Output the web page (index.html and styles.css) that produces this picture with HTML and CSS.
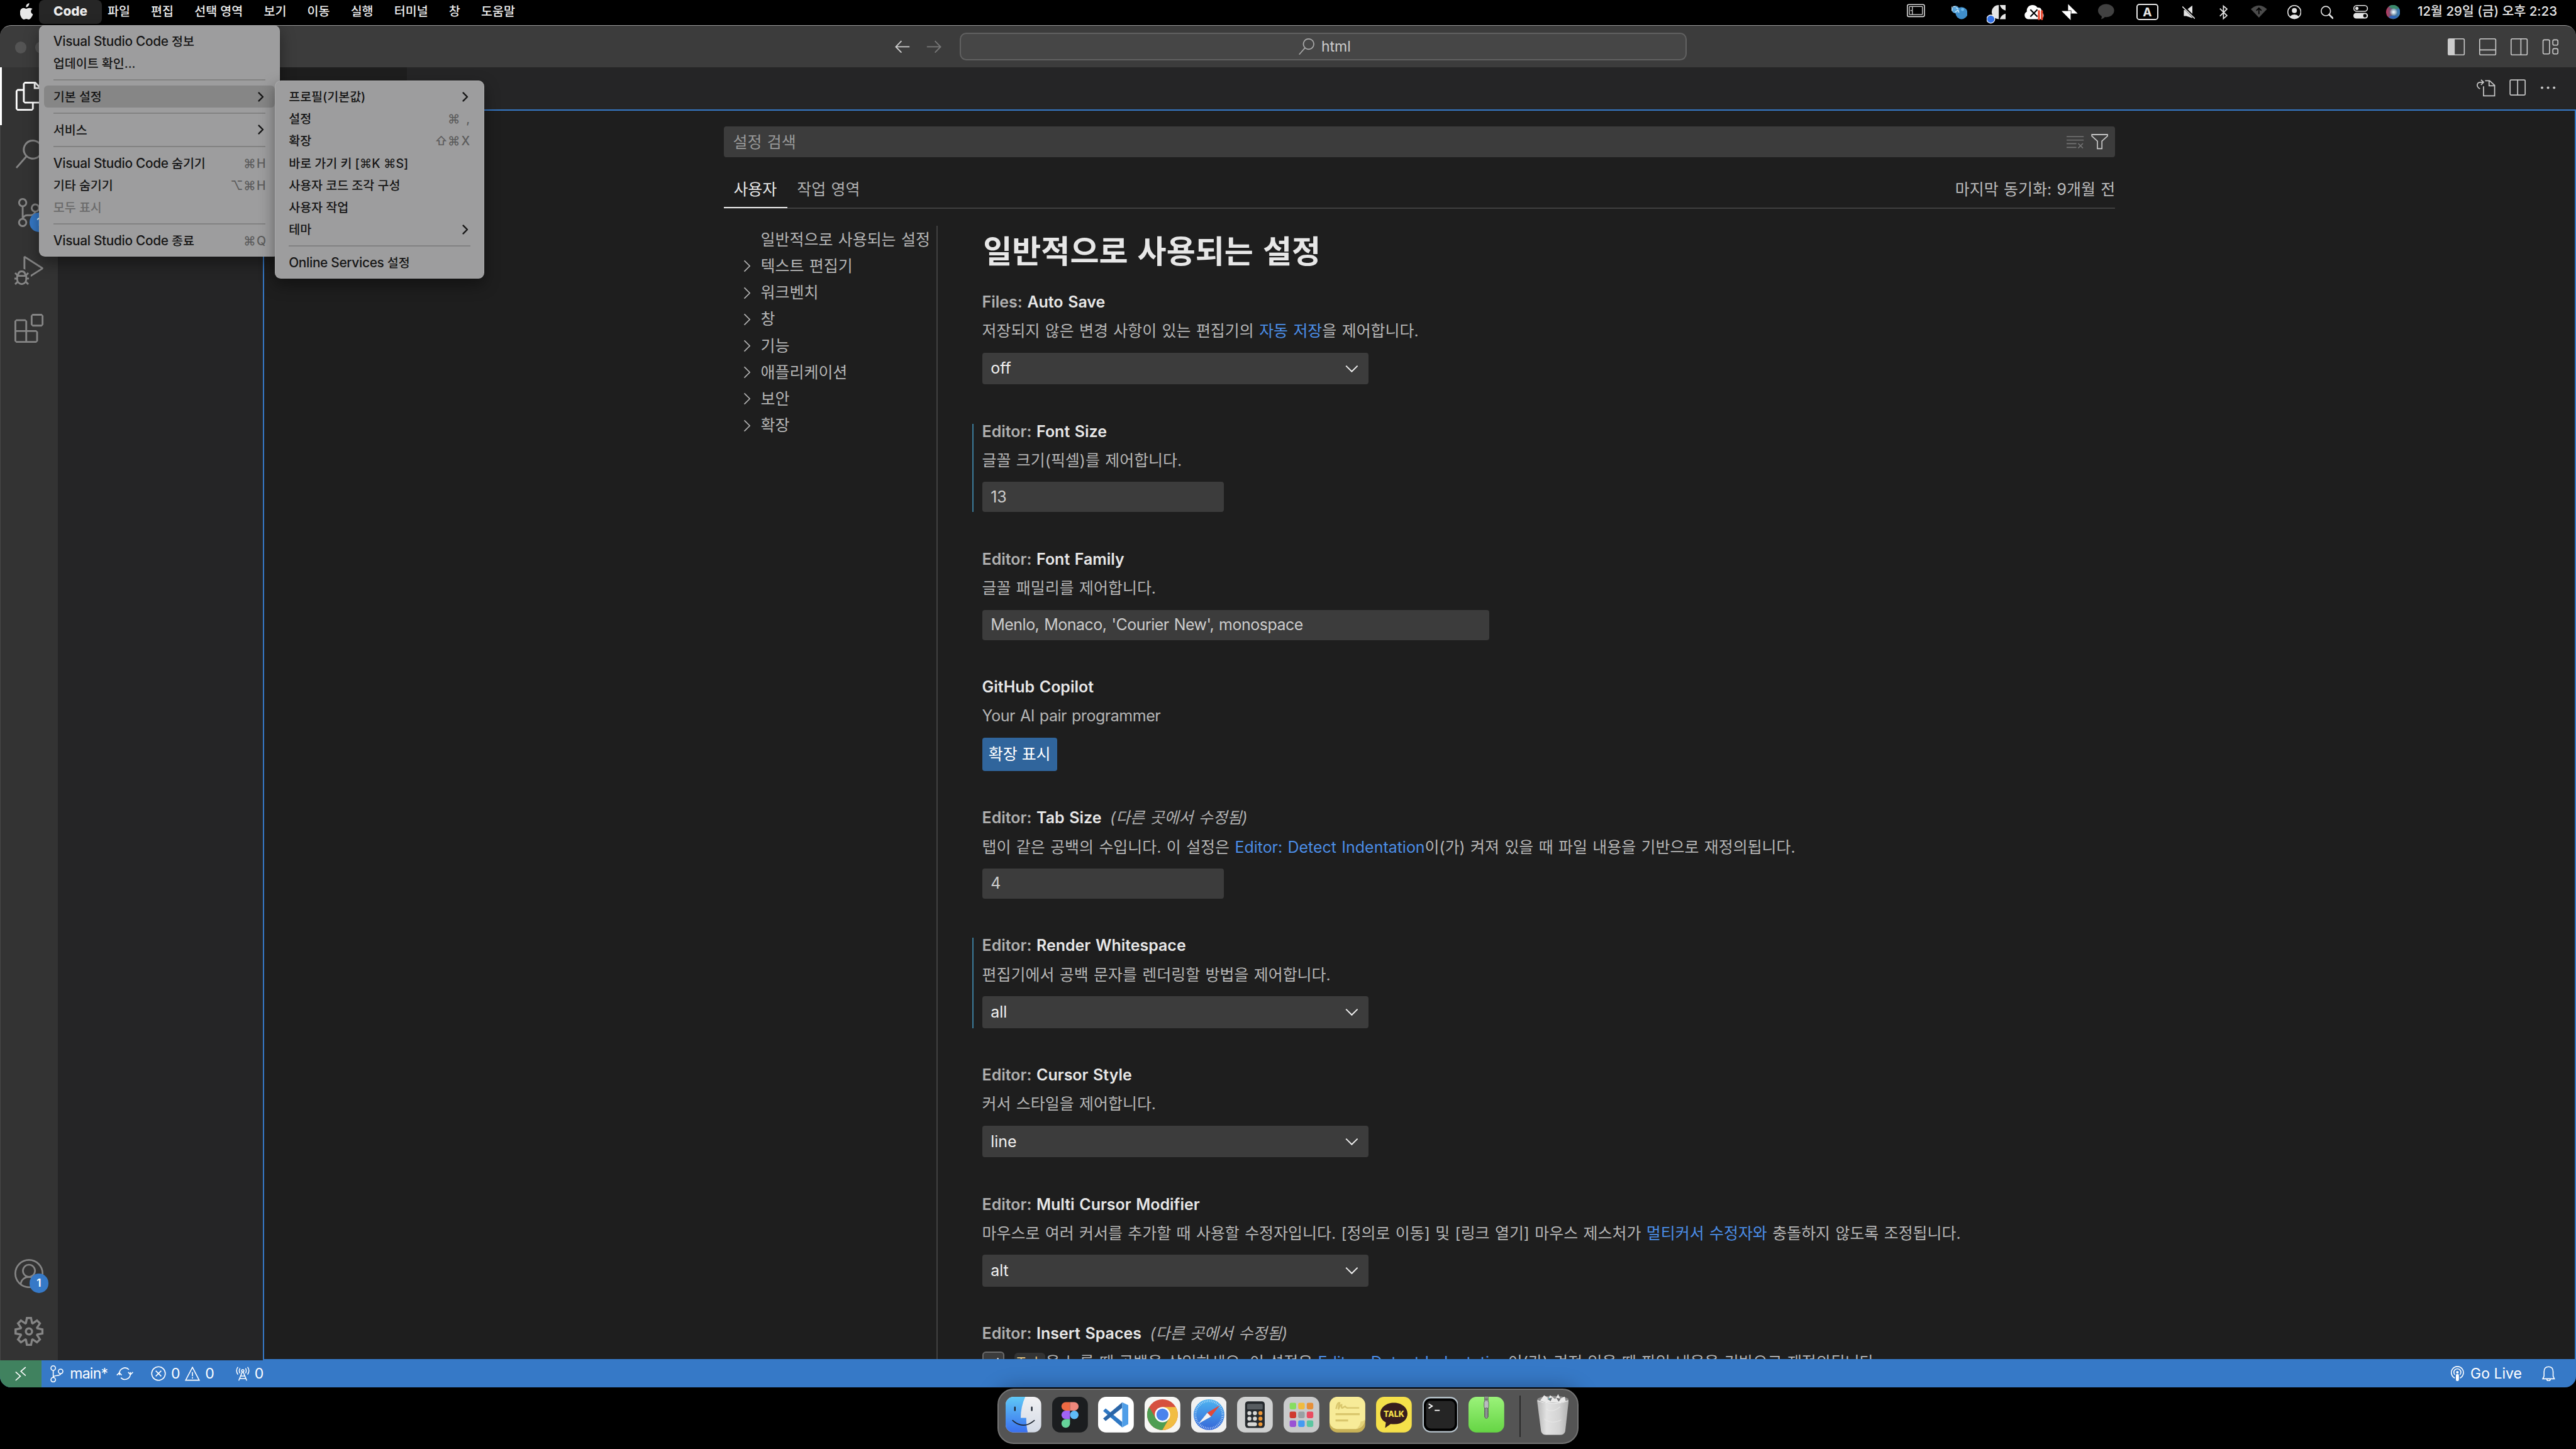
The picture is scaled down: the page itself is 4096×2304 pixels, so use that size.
FILE: index.html
```html
<!DOCTYPE html>
<html lang="ko">
<head>
<meta charset="utf-8">
<title>설정 — html</title>
<link rel="stylesheet" href="styles.css">
</head>
<body>
<svg class="defs" aria-hidden="true">
  <defs>
    <symbol id="chev-down" viewBox="0 0 26 16"><path d="M1.5 2 13 13.5 24.500 2" fill="none" stroke="currentColor" stroke-width="2.400"/></symbol>
    <symbol id="chev-right" viewBox="0 0 16 26"><path d="M2 1.500 13.500 13 2 24.500" fill="none" stroke="currentColor" stroke-width="2.200"/></symbol>
    <symbol id="menu-arrow" viewBox="0 0 12 20"><path d="M2 2 10 10 2 18" fill="none" stroke="currentColor" stroke-width="3" stroke-linecap="round" stroke-linejoin="round"/></symbol>
  </defs>
</svg>

<header class="menubar">
  <svg class="apple" viewBox="0 0 26 33"><path fill="#e8e8e8" d="M18 0c.4 2-.4 4-1.600 5.500C15.200 7 13.400 8 11.700 7.900c-.3-2 .6-4 1.700-5.300C14.600 1.200 16.500.2 18 0zM24.600 11.200c-2 1.200-3.100 2.900-3.100 5.200 0 2.700 1.500 4.700 4 5.700-.8 2.500-2 4.600-3.500 6.700-1.400 2-2.900 3.700-5 3.700-1.900 0-2.500-1.200-4.700-1.200-2.300 0-3 1.200-4.700 1.200-2 0-3.500-1.800-4.900-3.800C.6 25.600-.4 22-.4 18.700c0-5.500 3.500-8.900 7.200-8.900 2.200 0 3.900 1.400 5.300 1.400 1.300 0 3.300-1.500 5.900-1.500 2.500 0 4.900.4 6.600 1.500z"/></svg>
  <nav class="menus">
    <span class="menu-title app">Code</span><span class="menu-title">파일</span><span class="menu-title">편집</span><span class="menu-title">선택 영역</span><span class="menu-title">보기</span><span class="menu-title">이동</span><span class="menu-title">실행</span><span class="menu-title">터미널</span><span class="menu-title">창</span><span class="menu-title">도움말</span>
  </nav>
  <div class="tray">
    <svg viewBox="0 0 36 50" width="36"><g fill="none" stroke="#d9d9d9"><rect x="1" y="9" width="34" height="24" rx="3" stroke-width="2"/><rect x="5" y="13" width="26" height="16" rx="1" stroke-width="1.600"/><path d="M11 13v16" stroke-width="1.600"/></g><circle cx="8.500" cy="21" r="1.300" fill="#d9d9d9"/></svg>
    <svg viewBox="0 0 32 50" width="32"><circle cx="20" cy="26" r="12" fill="#3f8ecb"/><circle cx="8" cy="19" r="7.500" fill="#5aa5da"/><path d="M1 22V13M3 13l5 0M9 15l4 3M7 24l6-4M13 20l2 5" stroke="#d8eefb" stroke-width="1.600" fill="none"/><circle cx="22" cy="19" r="3" fill="#6db8ea"/></svg>
    <svg viewBox="0 0 38 50" width="38"><path d="M24 10v28a14 14 0 0 1 0-28z" fill="#e6e6e6"/><path d="M26 10h12v11q-9-2-12-11zM26 38h12V27q-9 2-12 11z" fill="#e6e6e6"/><circle cx="8" cy="38" r="8" fill="#3573e5" stroke="#fff" stroke-width="1.600"/></svg>
    <svg viewBox="0 0 40 50" width="40"><path d="M8 38a8 8 0 0 1-2-15C5 15 11 10 17 10q7 0 10 5c6-1 9 3 8 8 4 3 5 7 4 10q-2 5-7 5z" fill="#fff"/><path d="m13 19 14 14M27 19 13 33" stroke="#000" stroke-width="2.600"/><path d="M30 22v16M36 22v16" stroke="#e8452c" stroke-width="4" stroke-linecap="round"/></svg>
    <svg viewBox="0 0 32 50" width="32"><path d="M13 8 32 27H13zM0 22h18v18z" fill="#fff"/><path d="M13 21h6v6" fill="none" stroke="#000" stroke-width="1"/></svg>
    <svg viewBox="0 0 32 50" width="32"><ellipse cx="16" cy="21" rx="16" ry="13" fill="#414141"/><path d="M7 30q1 5-1 8 6-1 9-6z" fill="#414141"/></svg>
    <span class="ime">A</span>
    <svg viewBox="0 0 26 50" width="26"><path d="M3 20h5l12-9v25L8 32H3z" fill="#e3e3e3"/><path d="m0 11 27 27" stroke="#000" stroke-width="5"/><path d="m0 13 25 24" stroke="#e3e3e3" stroke-width="2"/></svg>
    <svg viewBox="0 0 17 50" width="17"><path d="m1 17 14 14-7 6V12l7 6L1 32" fill="none" stroke="#e3e3e3" stroke-width="2.200"/></svg>
    <svg viewBox="0 0 32 50" width="32"><path d="M0 18q16-14 32 0L16 35z" fill="#4b4b4b"/><path d="M16 28V16m-5 5 5-5 5 5" stroke="#000" stroke-width="2.200" fill="none"/></svg>
    <svg viewBox="0 0 28 50" width="28"><circle cx="14" cy="24" r="13" fill="none" stroke="#e3e3e3" stroke-width="2"/><circle cx="14" cy="21" r="5" fill="#e3e3e3"/><path d="M4.500 33q9.500-8.500 19 0-9.500 8-19 0z" fill="#e3e3e3"/></svg>
    <svg viewBox="0 0 25 50" width="25"><circle cx="10.300" cy="22" r="9.300" fill="none" stroke="#e3e3e3" stroke-width="2"/><path d="m17 29 7 7" stroke="#e3e3e3" stroke-width="3.400" stroke-linecap="round"/></svg>
    <svg viewBox="0 0 29 50" width="29"><rect x="1" y="11" width="27" height="11.500" rx="5.700" fill="none" stroke="#e3e3e3" stroke-width="2"/><circle cx="7" cy="16.700" r="3.200" fill="#e3e3e3"/><rect x="0" y="25.500" width="29" height="11.500" rx="5.700" fill="#e3e3e3"/><circle cx="23" cy="31.200" r="3.400" fill="#000"/></svg>
    <svg viewBox="0 0 28 50" width="28"><defs><radialGradient id="siri"><stop offset="0" stop-color="#fff"/><stop offset=".3" stop-color="#d9e9f5" stop-opacity=".9"/><stop offset="1" stop-color="#fff" stop-opacity="0"/></radialGradient><linearGradient id="siri2" x1="0" x2="1"><stop offset="0" stop-color="#c2355f"/><stop offset=".5" stop-color="#456a80"/><stop offset="1" stop-color="#3a7fc0"/></linearGradient></defs><circle cx="14" cy="24" r="14" fill="url(#siri2)"/><path d="M5 13a14 14 0 0 1 21 4q-9 3-21-4z" fill="#3a8a6c"/><path d="M5 34a14 14 0 0 0 18 0q-9-6-18 0z" fill="#2f66b8"/><circle cx="15" cy="24" r="8" fill="url(#siri)"/></svg>
    <span class="clock">12월 29일 (금) 오후 2:23</span>
  </div>
</header>

<main class="window">
  <div class="titlebar">
    <div class="lights"><i></i><i></i><i></i></div>
    <div class="history">
      <svg viewBox="0 0 30 26"><path d="M29 13H2M13 1.500 1.800 13 13 24.500" fill="none" stroke="#ccc" stroke-width="2.400"/></svg>
      <svg viewBox="0 0 30 26"><path d="M1 13h27M17 1.500 28.200 13 17 24.500" fill="none" stroke="#777" stroke-width="2.400"/></svg>
    </div>
    <div class="command">
      <svg viewBox="0 0 24 24"><path fill="#a8a8a8" d="M15.250 0a8.250 8.250 0 0 0-6.180 13.720L1 22.880l1.120 1 8.050-9.120A8.251 8.251 0 1 0 15.250.01V0zm0 15a6.750 6.750 0 1 1 0-13.500 6.750 6.750 0 0 1 0 13.500z"/></svg>
      <span>html</span>
    </div>
    <div class="layout-icons">
      <svg viewBox="0 0 34 34"><rect x="1" y="1" width="32" height="32" rx="2.500" fill="none" stroke="#ccc" stroke-width="2"/><path d="M1 1h13v32H1z" fill="#ccc"/></svg>
      <svg viewBox="0 0 34 34"><rect x="1" y="1" width="32" height="32" rx="2.500" fill="none" stroke="#ccc" stroke-width="2"/><path d="M1 23h32" stroke="#ccc" stroke-width="2"/></svg>
      <svg viewBox="0 0 34 34"><rect x="1" y="1" width="32" height="32" rx="2.500" fill="none" stroke="#ccc" stroke-width="2"/><path d="M20.500 1v32" stroke="#ccc" stroke-width="2"/></svg>
      <svg viewBox="0 0 34 34"><g fill="none" stroke="#ccc" stroke-width="2"><rect x="2" y="3" width="13" height="28" rx="2.500"/><rect x="21.500" y="3" width="10" height="10.500" rx="2.500"/><rect x="21.500" y="20.500" width="10" height="10.500" rx="2.500"/></g></svg>
    </div>
  </div>

  <div class="body">
    <aside class="activity">
      <div class="act active"><svg viewBox="0 0 24 24"><path d="M17.500 0h-9L7 1.500V6H2.500L1 7.500v15.070L2.500 24h12.070L16 22.570V18h4.700l1.300-1.430V4.500L17.500 0zm0 2.120l2.380 2.380H17.500V2.120zm-3 20.380h-12v-15H7v9.070L8.500 18h6v4.500zm6-6h-12v-15H16V6h4.500v10.500z"/></svg></div>
      <div class="act"><svg viewBox="0 0 24 24"><path d="M15.250 0a8.250 8.250 0 0 0-6.180 13.720L1 22.880l1.120 1 8.050-9.120A8.251 8.251 0 1 0 15.250.01V0zm0 15a6.750 6.750 0 1 1 0-13.500 6.750 6.750 0 0 1 0 13.500z"/></svg></div>
      <div class="act"><svg viewBox="0 0 24 24"><path d="M21.007 8.222A3.738 3.738 0 0 0 15.045 5.200a3.737 3.737 0 0 0 1.156 6.583 2.988 2.988 0 0 1-2.668 1.670h-2.990a4.456 4.456 0 0 0-2.989 1.165V7.400a3.737 3.737 0 1 0-1.494 0v9.117a3.776 3.776 0 1 0 1.816.099 2.990 2.990 0 0 1 2.668-1.667h2.990a4.484 4.484 0 0 0 4.223-3.039 3.736 3.736 0 0 0 3.250-3.687zM4.565 3.738a2.242 2.242 0 1 1 4.484 0 2.242 2.242 0 0 1-4.484 0zm4.484 16.441a2.242 2.242 0 1 1-4.484 0 2.242 2.242 0 0 1 4.484 0zm8.221-9.715a2.242 2.242 0 1 1 0-4.485 2.242 2.242 0 0 1 0 4.485z"/></svg><b class="badge">1</b></div>
      <div class="act"><svg viewBox="0 0 24 24"><path d="M10.940 13.500l-1.320 1.320a3.730 3.730 0 0 0-7.240 0L1.060 13.500 0 14.560l1.720 1.720-.22.22V18H0v1.500h1.500v.08c.077.489.214.966.41 1.420L0 22.940 1.060 24l1.650-1.650A4.308 4.308 0 0 0 6 24a4.310 4.310 0 0 0 3.290-1.650L10.940 24 12 22.940 10.090 21c.198-.464.336-.951.41-1.450v-.1H12V18h-1.500v-1.500l-.22-.22L12 14.560l-1.060-1.060zM6 13.500a2.250 2.250 0 0 1 2.250 2.250h-4.500A2.250 2.250 0 0 1 6 13.500zm3 6a3.330 3.330 0 0 1-3 3 3.330 3.330 0 0 1-3-3v-2.250h6v2.250zm14.760-9.900v1.260L13.500 17.370V15.600l8.500-5.370L9 2v9.460a5.070 5.070 0 0 0-1.500-.72V.63L8.640 0l15.120 9.600z"/></svg></div>
      <div class="act"><svg viewBox="0 0 24 24"><path d="M13.500 1.500L15 0h7.500L24 1.500V9l-1.500 1.500H15L13.500 9V1.500zm1.500 0V9h7.500V1.500H15zM0 15V6l1.500-1.500H9L10.500 6v7.500H18l1.500 1.500v7.500L18 24H1.500L0 22.500V15zm9-1.500V6H1.500v7.500H9zM9 15H1.500v7.500H9V15zm1.500 7.500H18V15h-7.500v7.500z"/></svg></div>
      <div class="act account"><svg viewBox="0 0 24 24"><g fill="none" stroke="#858585" stroke-width="1.400"><circle cx="12" cy="12" r="11.300"/><circle cx="12" cy="9.700" r="5"/><path d="M5.200 20.900C5.500 17 8.500 14.800 12 14.800s6.500 2.200 6.800 6.100"/></g></svg><b class="badge">1</b></div>
      <div class="act"><svg viewBox="0 0 24 24"><path d="M19.850 8.750l4.150.83v4.840l-4.150.83 2.350 3.520-3.430 3.430-3.520-2.350-.83 4.150H9.580l-.83-4.150-3.520 2.350-3.430-3.430 2.350-3.520L0 14.420V9.580l4.150-.83L1.800 5.230 5.230 1.800l3.520 2.350L9.580 0h4.840l.83 4.150 3.520-2.350 3.430 3.430-2.350 3.520zm-1.570 5.070l4-.81v-2l-4-.81-.54-1.300 2.290-3.430-1.430-1.430-3.430 2.290-1.300-.54-.81-4h-2l-.81 4-1.300.54-3.430-2.290-1.430 1.430L6.380 8.900l-.54 1.300-4 .81v2l4 .81.54 1.300-2.290 3.430 1.430 1.430 3.430-2.290 1.300.54.81 4h2l.81-4 1.300-.54 3.430 2.290 1.430-1.430-2.290-3.430.54-1.300zm-8.186-4.672A3.430 3.430 0 0 1 12 8.570 3.440 3.440 0 0 1 15.430 12a3.430 3.430 0 1 1-5.336-2.852zm.956 4.274c.281.188.612.288.95.288A1.700 1.700 0 0 0 13.710 12a1.710 1.710 0 1 0-2.660 1.422z"/></svg></div>
    </aside>
    <aside class="sidebar"></aside>
    <section class="group">
      <div class="tabs">
        <div class="tab"></div>
        <div class="tab-actions">
          <svg viewBox="0 0 40 36"><g fill="none" stroke="#c5c5c5" stroke-width="2.200"><path d="M15 14v19h22V12L27 3h-9M26 3v10h11"/><path d="M8 19C0 15 1 6 9 6h5M10 1l5 5-5 5"/></g></svg>
          <svg viewBox="0 0 34 34"><rect x="1.500" y="1.500" width="30" height="30" rx="2" fill="none" stroke="#c5c5c5" stroke-width="2.200"/><path d="M16.500 1v31" stroke="#c5c5c5" stroke-width="2.200"/></svg>
          <svg viewBox="0 0 34 34"><g fill="#c5c5c5"><circle cx="5" cy="17" r="2.500"/><circle cx="17" cy="17" r="2.500"/><circle cx="29" cy="17" r="2.500"/></g></svg>
        </div>
      </div>
      <div class="editor">
        <div class="settings">
          <div class="search"><span>설정 검색</span>
            <svg class="clear" viewBox="0 0 34 34"><path d="M0 6.500h34M0 13.500h34M0 20.500h19.500M0 28h19.500M23 20l9.500 9.500M32.500 20 23 29.500" fill="none" stroke="#737373" stroke-width="2"/></svg>
            <svg class="filter" viewBox="0 0 34 34"><path d="M1.500 2.500h31v3L21.500 15.500v15h-9v-15L1.500 5.500z" fill="none" stroke="#c5c5c5" stroke-width="2.200"/></svg>
          </div>
          <div class="scopes"><span class="scope on">사용자</span><span class="scope">작업 영역</span><span class="sync">마지막 동기화: 9개월 전</span></div>
          <div class="split">
            <ul class="toc">
              <li><i></i>일반적으로 사용되는 설정</li>
              <li><svg><use href="#chev-right"/></svg>텍스트 편집기</li>
              <li><svg><use href="#chev-right"/></svg>워크벤치</li>
              <li><svg><use href="#chev-right"/></svg>창</li>
              <li><svg><use href="#chev-right"/></svg>기능</li>
              <li><svg><use href="#chev-right"/></svg>애플리케이션</li>
              <li><svg><use href="#chev-right"/></svg>보안</li>
              <li><svg><use href="#chev-right"/></svg>확장</li>
            </ul>
            <div class="list">
              <h1>일반적으로 사용되는 설정</h1>
              <article class="item"><h2>Files: <b>Auto Save</b></h2><p>저장되지 않은 변경 사항이 있는 편집기의 <a>자동 저장</a>을 제어합니다.</p><div class="select">off<svg><use href="#chev-down"/></svg></div></article>
              <article class="item modified"><h2>Editor: <b>Font Size</b></h2><p>글꼴 크기(픽셀)를 제어합니다.</p><div class="input">13</div></article>
              <article class="item"><h2>Editor: <b>Font Family</b></h2><p>글꼴 패밀리를 제어합니다.</p><div class="input wide">Menlo, Monaco, 'Courier New', monospace</div></article>
              <article class="item"><h2><b>GitHub Copilot</b></h2><p class="latin">Your AI pair programmer</p><div class="button">확장 표시</div></article>
              <article class="item"><h2>Editor: <b>Tab Size</b><em>(다른 곳에서 수정됨)</em></h2><p>탭이 같은 공백의 수입니다. 이 설정은 <a>Editor: Detect Indentation</a>이(가) 켜져 있을 때 파일 내용을 기반으로 재정의됩니다.</p><div class="input">4</div></article>
              <article class="item modified"><h2>Editor: <b>Render Whitespace</b></h2><p>편집기에서 공백 문자를 렌더링할 방법을 제어합니다.</p><div class="select">all<svg><use href="#chev-down"/></svg></div></article>
              <article class="item"><h2>Editor: <b>Cursor Style</b></h2><p>커서 스타일을 제어합니다.</p><div class="select">line<svg><use href="#chev-down"/></svg></div></article>
              <article class="item"><h2>Editor: <b>Multi Cursor Modifier</b></h2><p>마우스로 여러 커서를 추가할 때 사용할 수정자입니다. [정의로 이동] 및 [링크 열기] 마우스 제스처가 <a>멀티커서 수정자와</a> 충돌하지 않도록 조정됩니다.</p><div class="select">alt<svg><use href="#chev-down"/></svg></div></article>
              <article class="item"><h2>Editor: <b>Insert Spaces</b><em>(다른 곳에서 수정됨)</em></h2><div class="check-row"><span class="check"><svg viewBox="0 0 44 44"><path d="M11 24l7 8L33 12" fill="none" stroke="#e0e0e0" stroke-width="3"/></svg></span><p><code>Tab</code>을 누를 때 공백을 삽입하세요. 이 설정은 <a>Editor: Detect Indentation</a>이(가) 켜져 있을 때 파일 내용을 기반으로 재정의됩니다.</p></div></article>
            </div>
          </div>
        </div>
      </div>
    </section>
  </div>

  <footer class="status">
    <div class="remote"><svg viewBox="0 0 22 28"><path d="M1 10.500 10.500 19 1 27.500M21 1 11.500 9.500 21 18" fill="none" stroke="#fff" stroke-width="2"/></svg></div>
    <svg class="branch" viewBox="0 0 26 34"><g fill="none" stroke="#fff" stroke-width="2"><circle cx="5.800" cy="5.500" r="4.500"/><circle cx="5.800" cy="28.500" r="4.500"/><circle cx="20.500" cy="12" r="4.500"/><path d="M5.800 10v14M20.500 16.500c0 6-14.700 1.500-14.700 7.500"/></g></svg>
    <span class="main">main*</span>
    <svg class="syncing" viewBox="0 0 34 28"><g fill="none" stroke="#fff" stroke-width="2"><path d="M6 17V13.500A11 11 0 0 1 25 6M28 11v3.500A11 11 0 0 1 9 22M1 17l5-5 4.500 5M33 11l-5 5-4.500-5"/></g></svg>
    <svg class="err" viewBox="0 0 30 30"><g fill="none" stroke="#fff" stroke-width="2"><circle cx="15" cy="15" r="13.500"/><path d="m9.500 9.500 11 11M20.500 9.500l-11 11"/></g></svg>
    <span class="n1">0</span>
    <svg class="warn" viewBox="0 0 30 28"><path d="M15 1.500 28.500 27h-27zM15 11v8M15 21v2.800" fill="none" stroke="#fff" stroke-width="2"/></svg>
    <span class="n2">0</span>
    <svg class="ports" viewBox="0 0 30 30"><g fill="none" stroke="#fff" stroke-width="1.900"><circle cx="15" cy="9.500" r="2.300"/><path d="M14 12 7 29M16 12l7 17M11 20h8M9 25h12M9.500 4.500q-3 5 0 10M20.500 4.500q3 5 0 10M5.500 2q-5.500 7 0 15M24.500 2q5.500 7 0 15"/></g></svg>
    <span class="n3">0</span>
    <span class="spacer"></span>
    <svg class="cast" viewBox="0 0 26 30"><g fill="none" stroke="#fff" stroke-width="2"><path d="M8 24A12 12 0 1 1 18 24"/><path d="M8 17.500a7 7 0 1 1 10 0"/></g><circle cx="13" cy="12.500" r="2.600" fill="#fff"/><rect x="10" y="16" width="6" height="14" rx="2.600" fill="#fff"/></svg>
    <span class="live">Go Live</span>
    <svg class="bell" viewBox="0 0 26 30"><path d="M1.500 25.500h23L22 20v-8.500C22 5 18.500 1.500 13 1.500S4 5 4 11.500V20zM9.500 26a3.500 3.500 0 0 0 7 0" fill="none" stroke="#fff" stroke-width="2"/></svg>
  </footer>
</main>

<div class="dropdown main-menu">
  <div class="row"><span><span class="lat">Visual Studio Code</span> 정보</span></div>
  <div class="row"><span>업데이트 확인...</span></div>
  <hr>
  <div class="row hot"><span>기본 설정</span><svg class="arr"><use href="#menu-arrow"/></svg></div>
  <hr>
  <div class="row"><span>서비스</span><svg class="arr"><use href="#menu-arrow"/></svg></div>
  <hr>
  <div class="row"><span><span class="lat">Visual Studio Code</span> 숨기기</span><kbd><i>⌘</i><i>H</i></kbd></div>
  <div class="row"><span>기타 숨기기</span><kbd><i>⌥</i><i>⌘</i><i>H</i></kbd></div>
  <div class="row off"><span>모두 표시</span></div>
  <hr>
  <div class="row"><span><span class="lat">Visual Studio Code</span> 종료</span><kbd><i>⌘</i><i>Q</i></kbd></div>
</div>
<div class="dropdown sub-menu">
  <div class="row"><span>프로필(기본값)</span><svg class="arr"><use href="#menu-arrow"/></svg></div>
  <div class="row"><span>설정</span><kbd><i>⌘</i><i>,</i></kbd></div>
  <div class="row"><span>확장</span><kbd><i>⇧</i><i>⌘</i><i>X</i></kbd></div>
  <div class="row"><span>바로 가기 키 [<i class="sym">⌘</i>K <i class="sym">⌘</i>S]</span></div>
  <div class="row"><span>사용자 코드 조각 구성</span></div>
  <div class="row"><span>사용자 작업</span></div>
  <div class="row"><span>테마</span><svg class="arr"><use href="#menu-arrow"/></svg></div>
  <hr>
  <div class="row"><span><span class="lat">Online Services</span> 설정</span></div>
</div>

<div class="dock">
  <svg class="app" viewBox="0 0 71 71"><defs><linearGradient id="fi" x2="0" y2="1"><stop stop-color="#5fc8f6"/><stop offset="1" stop-color="#3a6fee"/></linearGradient><linearGradient id="fr" x2="0" y2="1"><stop stop-color="#f1f1f3"/><stop offset="1" stop-color="#d3dae6"/></linearGradient><clipPath id="rr"><rect width="71" height="71" rx="16"/></clipPath></defs><g clip-path="url(#rr)"><path d="M0 0h71v71H0z" fill="url(#fr)"/><path d="M0 0h39q-9 20-9 42h11q0 17 3 29H0z" fill="url(#fi)"/></g><path d="M18.500 21v6M52 21v6" stroke="#1d2530" stroke-width="3" stroke-linecap="round"/><path d="M14 47q21 19 43 0" fill="none" stroke="#1d2530" stroke-width="2.200" stroke-linecap="round"/></svg>
  <svg class="app" viewBox="0 0 71 71"><rect width="71" height="71" rx="16" fill="#1b1d1f"/><path d="M27 10.500h8.500v17H27a8.500 8.500 0 0 1 0-17z" fill="#ee6a43"/><path d="M35.500 10.500H44a8.500 8.500 0 0 1 0 17h-8.500z" fill="#f0887c"/><path d="M27 27.500h8.500v17H27a8.500 8.500 0 0 1 0-17z" fill="#a063f5"/><circle cx="44" cy="36" r="8.500" fill="#5fbcf7"/><path d="M27 44.500h8.500V53A8.500 8.500 0 1 1 27 44.500z" fill="#66d39a"/></svg>
  <svg class="app" viewBox="0 0 71 71"><rect width="71" height="71" rx="16" fill="#fff"/><path d="M10 28l5-5 33 27v11z" fill="#2f78c4"/><path d="M10 43l5 5 33-26V11z" fill="#2b66a8"/><path d="M48 11l12 5.500v38L48 61z" fill="#4f9ee8"/></svg>
  <svg class="app" viewBox="0 0 71 71"><rect width="71" height="71" rx="16" fill="#f6f6f4"/><circle cx="35.500" cy="35.500" r="30.500" fill="#d6503f"/><path d="M9.100 20.250A30.500 30.500 0 0 0 35.500 66L48.700 43 35.500 35.500 22.300 43z" fill="#4f9e52"/><path d="M61.900 20.250A30.500 30.500 0 0 1 35.500 66L48.700 43 35.500 20.250z" fill="#f1bd42"/><circle cx="35.500" cy="35.500" r="15.200" fill="#fff"/><circle cx="35.500" cy="35.500" r="12" fill="#4a83ec"/></svg>
  <svg class="app" viewBox="0 0 71 71"><defs><linearGradient id="sf" x2="0" y2="1"><stop stop-color="#4db3f0"/><stop offset="1" stop-color="#3667d8"/></linearGradient></defs><rect width="71" height="71" rx="16" fill="#f1f1f1"/><circle cx="35.500" cy="35.500" r="30.500" fill="url(#sf)"/><circle cx="35.500" cy="35.500" r="27" fill="none" stroke="#cfe4fa" stroke-width="4" stroke-dasharray="1 2.530"/><path d="M57 17 39.500 39.500l-7.500-7.500z" fill="#e2493b"/><path d="M15 53 32 32l7.500 7.500z" fill="#f3f3f3"/></svg>
  <svg class="app" viewBox="0 0 71 71"><rect width="71" height="71" rx="16" fill="#cfd0d0"/><rect x="16" y="9" width="39" height="53" rx="6" fill="#25292d"/><rect x="20" y="14" width="31" height="11" rx="2" fill="#575c60"/><g fill="#d8d8d6"><circle cx="24.500" cy="32.500" r="4"/><circle cx="35.500" cy="32.500" r="4"/><circle cx="24.500" cy="43.500" r="4"/><circle cx="35.500" cy="43.500" r="4"/><rect x="20.500" y="50.500" width="19" height="8" rx="4"/></g><g fill="#ee9838"><circle cx="46.500" cy="32.500" r="4"/><circle cx="46.500" cy="43.500" r="4"/><circle cx="46.500" cy="54.500" r="4"/></g></svg>
  <svg class="app" viewBox="0 0 71 71"><rect width="71" height="71" rx="16" fill="#c9cacb"/><rect x="12" y="12" width="13" height="13" rx="3" fill="#86dd60"/><rect x="29" y="12" width="13" height="13" rx="3" fill="#f0bb3e"/><rect x="46" y="12" width="13" height="13" rx="3" fill="#e68f38"/><rect x="12" y="29.500" width="13" height="13" rx="3" fill="#cf3a30"/><rect x="29" y="29.500" width="13" height="13" rx="3" fill="#9aa0a3"/><rect x="46" y="29.500" width="13" height="13" rx="3" fill="#e94c62"/><rect x="12" y="47" width="13" height="13" rx="3" fill="#9a52d4"/><rect x="29" y="47" width="13" height="13" rx="3" fill="#459bf3"/><rect x="46" y="47" width="13" height="13" rx="3" fill="#5cc5a0"/></svg>
  <svg class="app" viewBox="0 0 71 71"><rect width="71" height="71" rx="16" fill="#c9b257"/><path d="M16 0h39a16 16 0 0 1 16 16v28q-2 17-18 20H16A16 16 0 0 1 0 48V16A16 16 0 0 1 16 0z" fill="#f7eb98"/><path d="M71 44q-2 17-18 20 8-6 9-15 6 0 9-5z" fill="#e4d37a"/><path d="M13 24q3-14 7-12-3 12-2 12 3-8 6-8-1 7 2 6l5-3q3 4 6 3h22" fill="none" stroke="#d9c66c" stroke-width="3"/><path d="M12 34.500h48M12 47h25" stroke="#d9c66c" stroke-width="4"/></svg>
  <svg class="app" viewBox="0 0 71 71"><rect width="71" height="71" rx="16" fill="#f5e04a"/><path d="M35.500 12C20 12 8.500 21.500 8.500 33.500c0 8 4 14 11 17.500l-1.500 11 11-8c22 3 33.500-8 33.500-20.500C62.500 21.500 51 12 35.500 12z" fill="#371d1e"/><text x="35.500" y="40.500" text-anchor="middle" textLength="41" lengthAdjust="spacingAndGlyphs" class="talk">TALK</text></svg>
  <svg class="app" viewBox="0 0 71 71"><rect width="71" height="71" rx="16" fill="#b7c3cb"/><rect x="2.500" y="3" width="66" height="65" rx="13.500" fill="#000"/><rect x="7" y="8" width="57" height="55" rx="9" fill="#252525"/><path d="m12 14 7 4.500-7 4.500M24 27h10" fill="none" stroke="#fff" stroke-width="2.400"/></svg>
  <svg class="app" viewBox="0 0 71 71"><defs><linearGradient id="zp" x2="0" y2="1"><stop stop-color="#9bf27a"/><stop offset="1" stop-color="#65d544"/></linearGradient></defs><rect width="71" height="71" rx="16" fill="url(#zp)"/><path d="M35.500 0v40" stroke="#444" stroke-width="8"/><path d="M35.500 0v40" stroke="#c9c9c9" stroke-width="7" stroke-dasharray="1.500 1.500"/><rect x="31" y="7" width="9" height="17" rx="4.500" fill="#b9bcbf" stroke="#555" stroke-width="1"/><rect x="32.500" y="22" width="6" height="21" rx="3" fill="#8c9093" stroke="#555" stroke-width="1"/></svg>
  <span class="divider"></span>
  <svg class="trash" viewBox="0 0 63 82"><defs><linearGradient id="tr"><stop stop-color="#b5b5b5"/><stop offset=".3" stop-color="#e2e2e2"/><stop offset=".7" stop-color="#d3d3d3"/><stop offset="1" stop-color="#b0b0b0"/></linearGradient></defs><path d="M0 13q31-10 63 0L56 75q-2 7-10 7H18q-8 0-10-7z" fill="url(#tr)"/><ellipse cx="31.500" cy="12" rx="31" ry="7.500" fill="#8b8b8b"/><path d="M6 14 14 3l9 6 3-6 10 8 6-10 4 9 9-4 2 9-12 3H20z" fill="#e9e9e9"/><path d="m20 10 7 5 3-7zM38 8l5 8 4-6z" fill="#6e6e70"/><path d="m24 8 3 2-4 2z" fill="#4aa6b0"/><path d="M1 14q31 11 61 0" fill="none" stroke="#ededed" stroke-width="1.600"/><path d="M18 30q10 10 28-4M14 50q14 12 34 2" fill="none" stroke="#eee" stroke-width="2" opacity=".5"/></svg>
</div>
</body>
</html>
```
FILE: styles.css
```css
/* 1rem = 8px; every length below is expressed against it */
html { font-size: 8px; }
* { box-sizing: border-box; }
body {
  margin: 0;
  width: 512rem;
  height: 288rem;
  overflow: hidden;
  background: #000;
  color: #ccc;
  font-family: Inter, "Noto Sans CJK KR", sans-serif;
  font-size: 3.12rem;
  line-height: 1;
  display: flex;
  flex-direction: column;
  position: relative;
}
svg { display: block; flex: none; }
.defs { position: absolute; width: 0; height: 0; }
i { font-style: normal; }

/* system menu bar */
.menubar { height: 5rem; flex: none; display: flex; align-items: flex-start; }
.apple { width: 2.6rem; height: 3.3rem; margin: .6rem 0 0 4rem; }
.menus { display: flex; margin-left: 1.2rem; }
.menu-title {
  height: 4.8rem; padding: 0 2.075rem; line-height: 4.5rem;
  font-size: 2.44rem; font-weight: 500; color: #ececec; white-space: nowrap;
}
.menu-title.app {
  background: #262626; border-radius: 1rem; font-size: 2.6rem; font-weight: 800; line-height: 4.6rem;
  width: 12.4rem; padding: 0; text-align: center; margin-right: -.9rem;
}
.tray {
  margin-left: auto; padding-right: 3.7rem; height: 5rem; display: grid;
  grid-template-columns: 8.8rem 7rem 7.4rem 7.6rem 7.2rem 7.6rem 9.1rem 7.4rem 6.3rem 7.2rem 6.7rem 6.5rem 6.4rem 6.3rem 27.800rem;
}
.tray svg { height: 5rem; width: auto; }
.ime {
  width: 4.4rem; height: 3.2rem; margin-top: .8rem; border: .25rem solid #e6e6e6; border-radius: .6rem;
  font-size: 2.4rem; font-weight: 700; line-height: 2.8rem; text-align: center; color: #e6e6e6;
}
.clock { font-size: 2.560rem; font-weight: 500; line-height: 4.6rem; color: #e6e6e6; white-space: nowrap; }

/* editor window */
.window {
  height: 270.7rem; flex: none; display: flex; flex-direction: column;
  border-radius: 2.2rem; overflow: hidden; background: #1e1e1e;
}
.titlebar {
  height: 8.4rem; flex: none; background: #3c3c3c; border-top: .2rem solid #9a9a9a;
  border-radius: 2.2rem 2.2rem 0 0; display: flex; align-items: center;
}
.lights { display: flex; gap: 1.7rem; padding-left: 3rem; width: 177.900rem; padding-top: .4rem; }
.lights i { width: 2.3rem; height: 2.3rem; border-radius: 50%; background: #545454; }
.history { display: flex; gap: 3.2rem; width: 12.900rem; }
.history svg { width: 3rem; height: 2.6rem; }
.command {
  width: 144.400rem; height: 5.600rem; background: #464646; border: .25rem solid #616161; border-radius: 1.3rem;
  display: flex; align-items: center; justify-content: center; gap: 1.3rem; font-size: 2.88rem; color: #ccc; padding-left: .5rem;
}
.command svg { width: 3.3rem; height: 3.3rem; }
.layout-icons { display: flex; gap: 2.850rem; margin-left: auto; padding-right: 3.3rem; }
.layout-icons svg { width: 3.4rem; height: 3.4rem; }

.body { flex: 1; min-height: 0; display: flex; }
.activity {
  width: 11.500rem; background: #333; border-left: .1rem solid #484848;
  display: flex; flex-direction: column; flex: none;
}
.act { height: 11.520rem; flex: none; position: relative; display: flex; align-items: center; justify-content: center; }
.act svg { width: 5.760rem; height: 5.760rem; fill: #858585; }
.act.active { margin-left: -.1rem; border-left: .4rem solid #fff; padding-right: .3rem; }
.act.active svg { fill: #fff; }
.act.account { margin-top: auto; }
.badge {
  position: absolute; left: 5.700rem; top: 5.800rem; width: 3.840rem; height: 3.840rem; border-radius: 50%;
  background: #3679c7; color: #fff; font-size: 2.160rem; font-weight: 600; line-height: 3.840rem; text-align: center;
}
.sidebar { width: 40.800rem; background: #252526; flex: none; }
.group { flex: 1; min-width: 0; display: flex; flex-direction: column; }
.tabs { height: 8.400rem; flex: none; background: #252526; display: flex; align-items: center; }
.tab { width: 28.600rem; height: 100%; background: #1e1e1e; }
.tab-actions { display: flex; gap: 2.600rem; margin-left: auto; padding-right: 3.900rem; }
.tab-actions svg { width: 3.400rem; height: 3.400rem; }
.tab-actions svg:first-child { width: 4rem; height: 3.600rem; }
.editor { flex: 1; min-height: 0; border: .25rem solid #3679c7; overflow: hidden; display: flex; justify-content: center; }
.settings { width: 276.500rem; padding-top: 3.050rem; display: flex; flex-direction: column; min-height: 0; word-spacing: .170rem; }
.search {
  height: 6.100rem; flex: none; background: #3c3c3c; border-radius: .5rem; padding: 0 1.400rem 0 1.800rem;
  display: flex; align-items: center; color: #989898;
}
.search span { padding-top: .4rem; }
.search .clear { width: 3.400rem; height: 3.400rem; margin-left: auto; }
.search .filter { width: 3.400rem; height: 3.400rem; margin-left: 1.400rem; }
.scopes { height: 10.300rem; flex: none; border-bottom: .25rem solid #404040; display: flex; color: #b0b0b0; padding-top: 2.700rem; }
.scope { height: 7.500rem; padding: 0 2.100rem 0 1.900rem; line-height: 7.600rem; }
.scope.on { color: #e7e7e7; border-bottom: .25rem solid #e7e7e7; }
.sync { margin-left: auto; line-height: 7.600rem; color: #bbb; }
.split { flex: 1; min-height: 0; display: flex; padding-top: 3.400rem; }
.toc { width: 42.500rem; flex: none; border-right: .25rem solid #404040; margin: 0; padding: .1rem 0 0 3.900rem; list-style: none; color: #b5b5b5; }
.toc li { height: 5.280rem; display: flex; align-items: center; white-space: nowrap; }
.toc svg { width: 1.500rem; height: 2.500rem; margin-right: 1.900rem; }
.toc i { width: 3.400rem; }
.list { flex: 1; min-width: 0; padding-left: 6.800rem; overflow: hidden; }
h1 { margin: 0 0 0 2.200rem; height: 13.600rem; padding-top: .4rem; line-height: 9.600rem; font-size: 6.260rem; font-weight: 700; color: #e7e7e7; word-spacing: .4rem; }
.item { border-left: .3rem solid transparent; padding-left: 1.750rem; margin-bottom: 7.810rem; display: flex; flex-direction: column; align-items: flex-start; }
.item.modified { border-color: #3b7a99; }
.item h2 { margin: 0; height: 3.200rem; line-height: 3.200rem; font-size: 3.120rem; font-weight: 600; color: #b0b0b0; white-space: nowrap; }
.item h2 b { font-weight: 600; color: #e7e7e7; }
.item h2 em { font-weight: 400; margin-left: 1.700rem; }
.item p { margin: 2.600rem 0; height: 3.200rem; line-height: 3.200rem; color: #b5b5b5; white-space: nowrap; }
.item p.latin { letter-spacing: -.055rem; }
a { color: #4b8de6; }
.select, .input {
  background: #3c3c3c; border-radius: .5rem; padding: 0 1.700rem; display: flex; align-items: center; justify-content: space-between;
}
.select { width: 76.800rem; height: 6.300rem; color: #f0f0f0; padding-right: 2rem; }
.select svg { width: 2.600rem; height: 1.600rem; }
.input { width: 48rem; height: 6rem; color: #ccc; }
.input.wide { width: 100.800rem; justify-content: flex-start; letter-spacing: -.060rem; }
.button { width: 14.900rem; height: 6.600rem; border-radius: .5rem; background: #30659c; color: #fff; display: flex; align-items: center; justify-content: center; white-space: nowrap; word-spacing: 0; }
.check-row { display: flex; padding-top: 1.900rem; }
.check-row p { margin: .6rem 0 0 2rem; }
.check { width: 4.400rem; height: 4.400rem; border: .25rem solid #6b6b6b; border-radius: .7rem; background: #3c3c3c; }
.check svg { width: 100%; height: 100%; }
code { font-family: "DejaVu Sans Mono", monospace; font-size: 2.880rem; color: #d7ba7d; background: #333; border-radius: .7rem; padding: .4rem .5rem; }

/* status bar */
.status { height: 5.300rem; flex: none; background: #3679c7; color: #fff; display: flex; align-items: center; font-size: 2.880rem; }
.status > * { flex: none; }
.remote { width: 8.200rem; height: 100%; background: #40825f; display: flex; align-items: center; justify-content: center; }
.remote svg { width: 2.200rem; height: 2.800rem; }
.branch { width: 2.600rem; height: 3.400rem; margin-left: 1.800rem; }
.main { width: 10.500rem; padding-left: 1.300rem; letter-spacing: -.090rem; }
.syncing { width: 3.400rem; height: 2.800rem; }
.err { width: 3rem; height: 3rem; margin-left: 3.500rem; }
.n1 { width: 3.800rem; padding-left: 1rem; }
.warn { width: 3rem; height: 2.800rem; }
.n2 { width: 7rem; padding-left: 1rem; }
.ports { width: 3rem; height: 3rem; }
.n3 { padding-left: .8rem; }
.status .spacer { flex: 1; }
.cast, .bell { width: 2.600rem; height: 3rem; }
.live { width: 15.600rem; padding-left: 1.300rem; white-space: nowrap; }
.bell { margin-right: 4.100rem; }

/* open menus */
.dropdown {
  position: absolute; padding: 1rem; border-radius: 1.200rem; background: #9d9d9e; color: #161616;
  font-size: 2.440rem; font-weight: 500; box-shadow: 0 1.200rem 3rem rgba(0,0,0,.4), inset 0 0 0 .1rem rgba(255,255,255,.15);
}
.main-menu { left: 7.800rem; top: 5rem; width: 47.800rem; height: 46rem; }
.sub-menu { left: 54.600rem; top: 16rem; width: 41.600rem; height: 39.400rem; }
.row { height: 4.400rem; padding: 0 1.800rem; border-radius: .8rem; display: flex; align-items: center; justify-content: space-between; white-space: nowrap; }
.row > span, .row > kbd { padding-top: .3rem; }
.row.hot { background: #868686; }
.row.off { color: #6b6b6b; }
.lat { font-size: 2.600rem; letter-spacing: -.038rem; }
.dropdown hr { margin: 1rem 1.800rem; border: 0; height: .2rem; background: #828282; }
.sub-menu hr { margin-right: 1.700rem; }
.arr { width: 1.200rem; height: 2rem; margin-right: .3rem; }
kbd { font: inherit; font-weight: 500; color: #5c5c5c; display: flex; }
kbd i { width: 2.600rem; font-family: Inter, "DejaVu Sans", sans-serif; }
kbd i:last-child { width: 1.800rem; text-align: right; }
.sym { font-family: "DejaVu Sans", sans-serif; }

/* dock */
.dock {
  position: relative; align-self: center; width: 115.400rem; height: 11rem; margin-top: .3rem; padding: 0 1.600rem;
  border: .25rem solid #747474; border-radius: 3.200rem; background: #545454; display: flex; align-items: center;
  box-shadow: 0 0 4rem rgba(0,0,0,.35);
}
.dock .app { width: 7.100rem; height: 7.100rem; margin: -.7rem 2.100rem 0 0; }
.dock .app:first-child { margin-left: -.250rem; }
.divider { width: .25rem; height: 8.200rem; background: #2b2b2b; margin: 0 3.200rem 0 .9rem; }
.trash { width: 6.300rem; height: 8.200rem; margin-top: -.8rem; }
.talk { font: 800 17px Inter, sans-serif; fill: #f5e04a; }
```
